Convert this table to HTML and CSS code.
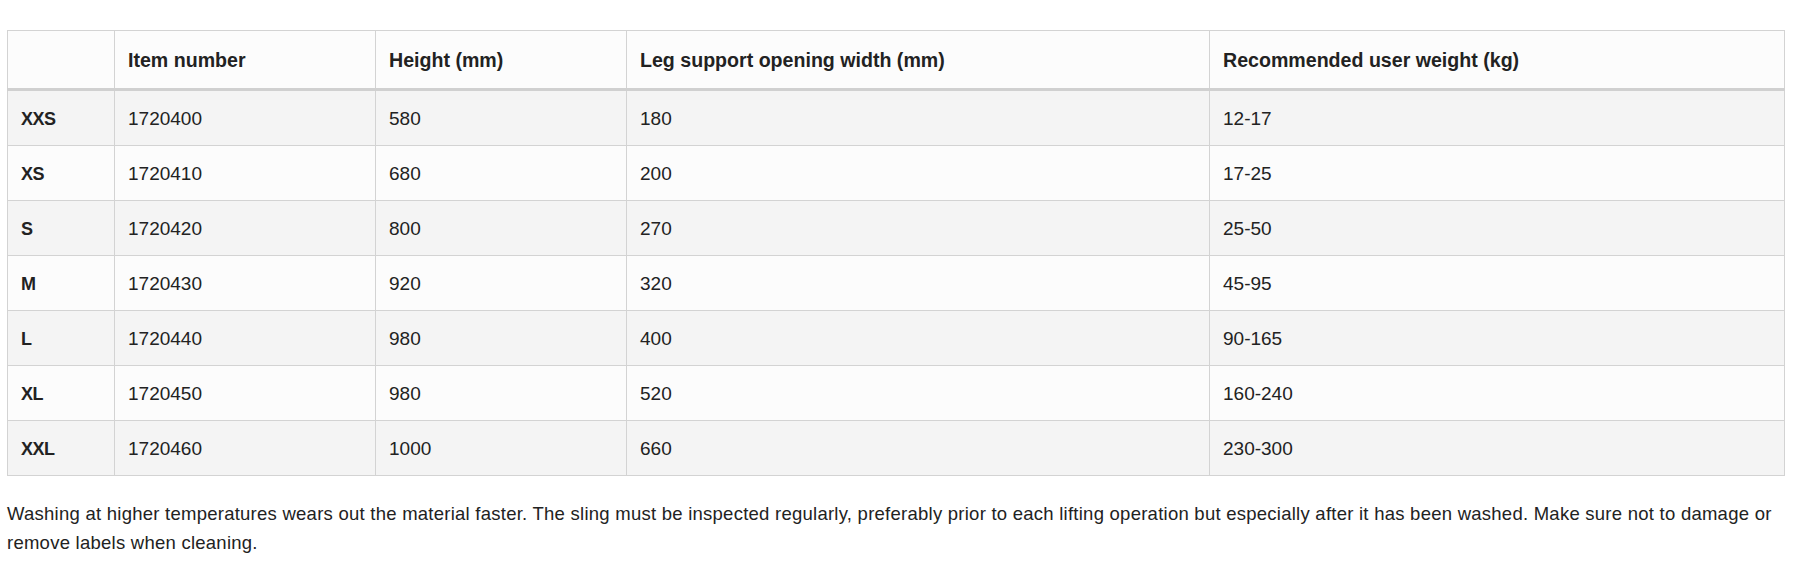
FILE: index.html
```html
<!DOCTYPE html>
<html lang="en">
<head>
<meta charset="utf-8">
<title>Sizes</title>
<link rel="stylesheet" href="styles.css">
</head>
<body>
<div class="page">
  <table class="sizes">
    <colgroup>
      <col class="c-size">
      <col class="c-item">
      <col class="c-height">
      <col class="c-leg">
      <col class="c-weight">
    </colgroup>
    <thead>
      <tr>
        <th></th>
        <th>Item number</th>
        <th>Height (mm)</th>
        <th>Leg support opening width (mm)</th>
        <th>Recommended user weight (kg)</th>
      </tr>
    </thead>
    <tbody>
      <tr><th>XXS</th><td>1720400</td><td>580</td><td>180</td><td>12-17</td></tr>
      <tr><th>XS</th><td>1720410</td><td>680</td><td>200</td><td>17-25</td></tr>
      <tr><th>S</th><td>1720420</td><td>800</td><td>270</td><td>25-50</td></tr>
      <tr><th>M</th><td>1720430</td><td>920</td><td>320</td><td>45-95</td></tr>
      <tr><th>L</th><td>1720440</td><td>980</td><td>400</td><td>90-165</td></tr>
      <tr><th>XL</th><td>1720450</td><td>980</td><td>520</td><td>160-240</td></tr>
      <tr><th>XXL</th><td>1720460</td><td>1000</td><td>660</td><td>230-300</td></tr>
    </tbody>
  </table>
  <p class="note">Washing at higher temperatures wears out the material faster. The sling must be inspected regularly, preferably prior to each lifting operation but especially after it has been washed. Make sure not to damage or remove labels when cleaning.</p>
</div>
</body>
</html>
```

FILE: styles.css
```css
html, body {
  margin: 0;
  padding: 0;
  background: #ffffff;
}

body {
  font-family: "Liberation Sans", Arial, sans-serif;
  color: #222222;
}

.page {
  padding: 30px 16px 0 7px;
}

.sizes {
  width: 1777px;
  border-collapse: collapse;
  table-layout: fixed;
  border: 1px solid #cfcfcf;
}

.c-size { width: 107px; }
.c-item { width: 261px; }
.c-height { width: 251px; }
.c-leg { width: 583px; }
.c-weight { width: 575px; }

.sizes th,
.sizes td {
  border: 1px solid #d3d3d3;
  text-align: left;
  padding: 2px 13px 0 13px;
  font-size: 19px;
  color: #222222;
}

.sizes thead th {
  height: 55px;
  background: #fcfcfc;
  font-weight: bold;
  font-size: 19.6px;
  border-bottom: 3px solid #d0d0d0;
}

.sizes tbody th,
.sizes tbody td {
  height: 52px;
}

.sizes tbody th {
  font-weight: bold;
  font-size: 18px;
  letter-spacing: -0.5px;
}

.sizes tbody tr:nth-child(odd) th,
.sizes tbody tr:nth-child(odd) td {
  background: #f4f4f4;
}

.sizes tbody tr:nth-child(even) th,
.sizes tbody tr:nth-child(even) td {
  background: #fcfcfc;
}

.note {
  margin: 23px 0 0 0;
  font-size: 18.5px;
  letter-spacing: 0.25px;
  line-height: 29px;
  color: #222222;
}
```
